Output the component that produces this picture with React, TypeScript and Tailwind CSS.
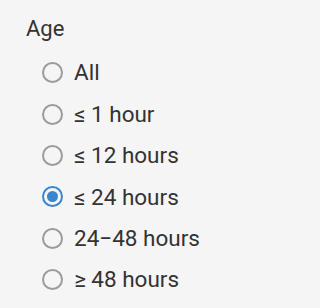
import { useState } from "react"

const options = ["All", "≤ 1 hour", "≤ 12 hours", "≤ 24 hours", "24−48 hours", "≥ 48 hours"]

export default function App() {
  const [age, setAge] = useState("≤ 24 hours")

  return (
    <div className="min-h-screen w-full bg-[#f5f5f5] text-[#333333] font-['Roboto',sans-serif] pl-[26px] pt-[14px]">
      <div className="text-[22px] leading-[29px]">Age</div>
      <div className="flex flex-col mt-[9px] pl-[16px]">
        {options.map((opt) => {
          const checked = opt === age
          return (
            <label key={opt} className="flex items-center h-[41.4px] cursor-pointer" onClick={() => setAge(opt)}>
              {checked ? (
                <span className="w-[21px] h-[21px] rounded-full border-2 border-[#3a85cf] flex items-center justify-center">
                  <span className="w-[11px] h-[11px] rounded-full bg-[#3a85cf]" />
                </span>
              ) : (
                <span className="w-[21px] h-[21px] rounded-full border-2 border-[#9b9b9b]" />
              )}
              <span className="ml-[11px] text-[22.5px] leading-none">{opt}</span>
            </label>
          )
        })}
      </div>
    </div>
  )
}
